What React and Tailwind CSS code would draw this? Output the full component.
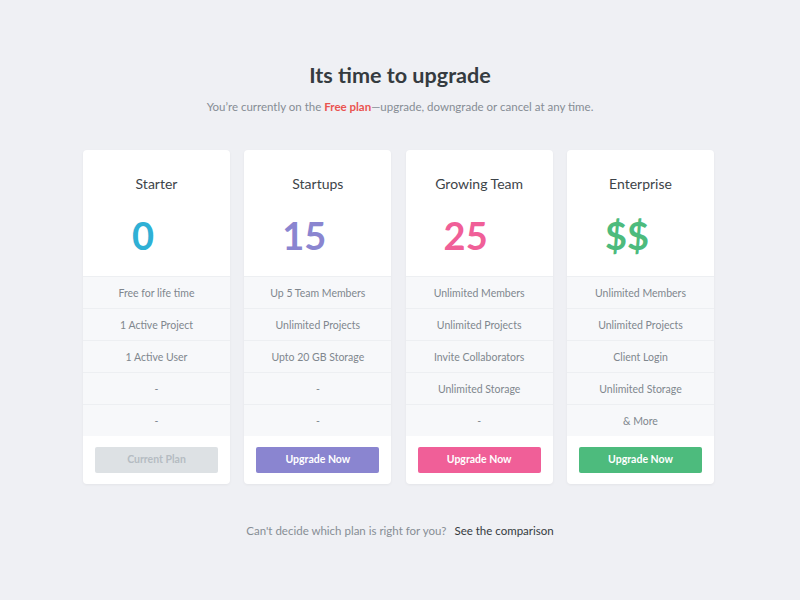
const plans = [
  {
    name: 'Starter',
    price: '0',
    color: 'text-[#2fb0d5]',
    features: ['Free for life time', '1 Active Project', '1 Active User', '-', '-'],
    button: 'Current Plan',
    btn: 'bg-[#dde1e4] text-[#b5bcc2]',
  },
  {
    name: 'Startups',
    price: '15',
    color: 'text-[#8a85d0]',
    features: ['Up 5 Team Members', 'Unlimited Projects', 'Upto 20 GB Storage', '-', '-'],
    button: 'Upgrade Now',
    btn: 'bg-[#8a85d0] text-white',
  },
  {
    name: 'Growing Team',
    price: '25',
    color: 'text-[#f05f98]',
    features: ['Unlimited Members', 'Unlimited Projects', 'Invite Collaborators', 'Unlimited Storage', '-'],
    button: 'Upgrade Now',
    btn: 'bg-[#f05f98] text-white',
  },
  {
    name: 'Enterprise',
    price: '$$',
    color: 'text-[#4dbb7d]',
    features: ['Unlimited Members', 'Unlimited Projects', 'Client Login', 'Unlimited Storage', '& More'],
    button: 'Upgrade Now',
    btn: 'bg-[#4dbb7d] text-white',
  },
];

const PlanCard = ({ plan }) => (
  <div className="w-[147px] bg-white rounded-[4px] overflow-hidden shadow-[0_1px_3px_rgba(0,0,0,0.05)]">
    <div className="h-[126px] flex flex-col items-center">
      <div className="mt-[25px] text-[14px] leading-[18px] text-[#3d4449]">{plan.name}</div>
      <div className="mt-[20px] flex items-center">
        <span className={`text-[38px] leading-[44px] font-bold ${plan.color}`}>{plan.price}</span>
        <span className="w-[27px]" />
      </div>
    </div>
    <div className="bg-[#f7f8fa]">
      {plan.features.map((f, i) => (
        <div
          key={i}
          className="h-[32px] pt-[2px] flex items-center justify-center border-t border-[#edeff2] text-[10.5px] text-[#80878e]"
        >
          {f}
        </div>
      ))}
    </div>
    <div className="h-[48px] px-[12px] pt-[11px]">
      <div className={`h-[26px] rounded-[2px] flex items-center justify-center text-[10.5px] font-bold ${plan.btn}`}>
        {plan.button}
      </div>
    </div>
  </div>
);

export default function App() {
  return (
    <div
      className="w-[800px] h-[600px] bg-[#eff0f4] flex flex-col items-center"
      style={{ fontFamily: 'Lato, "Open Sans", sans-serif' }}
    >
      <h1 className="mt-[61px] text-[21.6px] leading-[28px] font-bold text-[#353b40]">Its time to upgrade</h1>
      <p className="mt-[10px] text-[11.5px] leading-[16px] text-[#868d94]">
        You’re currently on the <span className="text-[#ea5450] font-bold">Free plan</span>—upgrade, downgrade or
        cancel at any time.
      </p>
      <div className="mt-[35px] flex gap-[14.33px] ml-[-3px]">
        {plans.map((p) => (
          <PlanCard key={p.name} plan={p} />
        ))}
      </div>
      <div className="mt-[39px] text-[11.5px] leading-[16px] text-[#878e95]">
        Can't decide which plan is right for you?
        <span className="ml-[8px] text-[#353b40]">See the comparison</span>
      </div>
    </div>
  );
}
